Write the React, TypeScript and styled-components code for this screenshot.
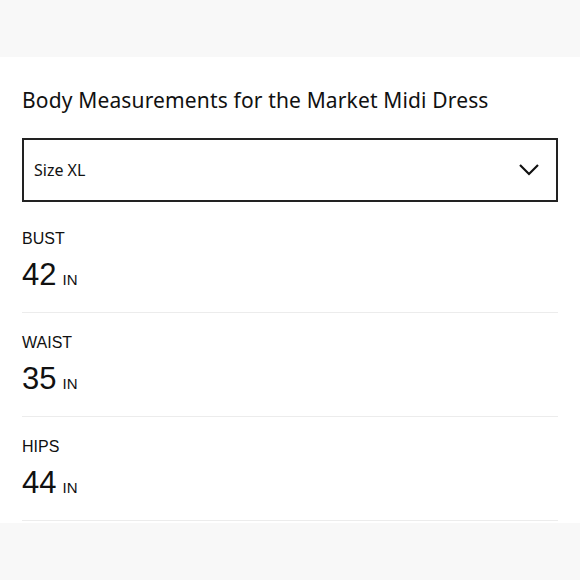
import React from 'react'
import styled, { createGlobalStyle } from 'styled-components'

const GlobalStyle = createGlobalStyle`
  html, body {
    margin: 0;
    padding: 0;
    background: #f8f8f8;
  }
  body {
    font-family: 'Liberation Sans', Arial, sans-serif;
    color: #111;
  }
`

const Page = styled.div`
  width: 580px;
  height: 580px;
  padding-top: 57px;
  box-sizing: border-box;
  background: #f8f8f8;
`

const Panel = styled.div`
  background: #fff;
  padding: 31px 22px 2px 22px;
`

const Title = styled.h2`
  margin: 0;
  font-family: 'Noto Sans', sans-serif;
  font-weight: 400;
  font-size: 21px;
  line-height: 24px;
  letter-spacing: 0.15px;
  color: #111;
`

const Select = styled.div`
  margin-top: 26px;
  margin-bottom: 7px;
  height: 64px;
  box-sizing: border-box;
  border: 2px solid #222;
  display: flex;
  align-items: center;
  justify-content: space-between;
  padding: 0 16px 0 10px;
  font-family: 'Noto Sans', sans-serif;
  font-size: 16px;
  color: #111;
`

const Row = styled.div`
  padding: 20px 0 19px;
  border-bottom: 1px solid #ececec;
`

const Label = styled.div`
  font-size: 16px;
  line-height: 20px;
  text-transform: uppercase;
  color: #111;
`

const Value = styled.div`
  margin-top: 8px;
  height: 36px;
  display: flex;
  align-items: baseline;
  font-size: 31px;
  line-height: 36px;
  color: #111;
`

const Unit = styled.span`
  margin-left: 6px;
  font-size: 15px;
  line-height: 1;
  text-transform: uppercase;
`

const Chevron = () => (
  <svg width="22" height="14" viewBox="0 0 22 14" fill="none">
    <polyline points="2,2 11,11 20,2" stroke="#111" strokeWidth="2.2" />
  </svg>
)

const measurements = [
  { label: 'Bust', value: 42 },
  { label: 'Waist', value: 35 },
  { label: 'Hips', value: 44 },
]

export default function App() {
  return (
    <Page>
      <GlobalStyle />
      <Panel>
        <Title>Body Measurements for the Market Midi Dress</Title>
        <Select>
          <span>Size XL</span>
          <Chevron />
        </Select>
        {measurements.map((m) => (
          <Row key={m.label}>
            <Label>{m.label}</Label>
            <Value>
              {m.value}
              <Unit>in</Unit>
            </Value>
          </Row>
        ))}
      </Panel>
    </Page>
  )
}
